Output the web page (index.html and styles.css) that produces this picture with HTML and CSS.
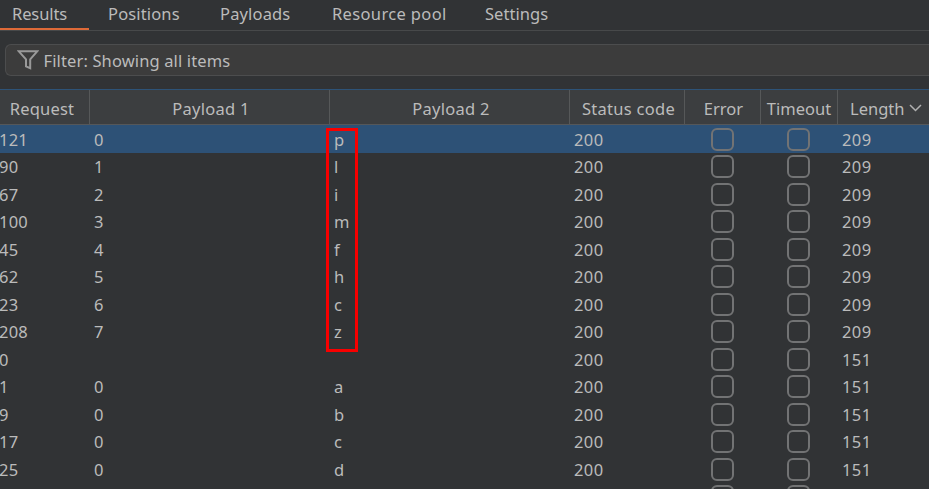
FILE: index.html
```html
<!DOCTYPE html>
<html lang="en">
<head>
<meta charset="utf-8">
<title>Results</title>
<link rel="stylesheet" href="styles.css">
</head>
<body>
<nav class="tabs">
<span class="tab active"><span class="w-results">Results</span></span>
<span class="tab"><span class="w-positions">Positions</span></span>
<span class="tab"><span class="w-payloads">Payloads</span></span>
<span class="tab"><span class="w-pool">Resource pool</span></span>
<span class="tab"><span class="w-settings">Settings</span></span>
</nav>
<div class="filter">
<svg class="funnel" width="22" height="20" viewBox="0 0 22 20"><path d="M1.8 1.3H20.2L13.2 9.3V18.2L9 16.4V9.3Z"/></svg>
<span class="filter-text">Filter: Showing all items</span>
</div>
<main class="table">
<div class="head">
<span>Request</span><span class="wide">Payload 1</span><span class="wide">Payload 2</span><span class="wide">Status code</span><span class="error">Error</span><span>Timeout</span>
<span class="sorted">Length<svg class="chevron" width="13" height="8" viewBox="0 0 13 8"><path d="M1 1L6.5 6.5L12 1"/></svg></span>
</div>
<div class="rows">
<div class="row selected"><span>121</span><span>0</span><span>p</span><span>200</span><i></i><i></i><span>209</span></div>
<div class="row"><span>90</span><span>1</span><span>l</span><span>200</span><i></i><i></i><span>209</span></div>
<div class="row"><span>67</span><span>2</span><span>i</span><span>200</span><i></i><i></i><span>209</span></div>
<div class="row"><span>100</span><span>3</span><span>m</span><span>200</span><i></i><i></i><span>209</span></div>
<div class="row"><span>45</span><span>4</span><span>f</span><span>200</span><i></i><i></i><span>209</span></div>
<div class="row"><span>62</span><span>5</span><span>h</span><span>200</span><i></i><i></i><span>209</span></div>
<div class="row"><span>23</span><span>6</span><span>c</span><span>200</span><i></i><i></i><span>209</span></div>
<div class="row"><span>208</span><span>7</span><span>z</span><span>200</span><i></i><i></i><span>209</span></div>
<div class="row"><span>0</span><span></span><span></span><span>200</span><i></i><i></i><span>151</span></div>
<div class="row"><span>1</span><span>0</span><span>a</span><span>200</span><i></i><i></i><span>151</span></div>
<div class="row"><span>9</span><span>0</span><span>b</span><span>200</span><i></i><i></i><span>151</span></div>
<div class="row"><span>17</span><span>0</span><span>c</span><span>200</span><i></i><i></i><span>151</span></div>
<div class="row"><span>25</span><span>0</span><span>d</span><span>200</span><i></i><i></i><span>151</span></div>
<div class="row"><span></span><span></span><span></span><span></span><i></i><i></i><span></span></div>
</div>
<div class="highlight"></div>
</main>
</body>
</html>
```
FILE: styles.css
```css
* { box-sizing: border-box; }
body {
  margin: 0;
  width: 929px;
  height: 489px;
  overflow: hidden;
  background: #313335;
  color: #bbbbbb;
  font: 16.5px/24px "Noto Sans", "Open Sans", sans-serif;
}
.tabs {
  display: flex;
  height: 31px;
  border-bottom: 1px solid #47494a;
  white-space: nowrap;
}
.tab {
  height: 30px;
  padding: 2px 0 0 19px;
  margin-right: 22px;
}
.tab > span { display: block; }
.tab.active {
  width: 89px;
  padding-left: 12px;
  margin-right: 0;
  border-bottom: 2px solid #de6a38;
}
.w-results { letter-spacing: -.1px; }
.w-positions { width: 71px; letter-spacing: .15px; }
.w-payloads { width: 71px; letter-spacing: .15px; }
.w-pool { width: 112px; letter-spacing: .35px; }
.w-settings { letter-spacing: .05px; }
.filter {
  display: flex;
  align-items: center;
  height: 32px;
  margin: 13px 0 0 5px;
  padding-left: 11px;
  border: 1px solid #4c4d4e;
  border-right: 0;
  border-radius: 6px 0 0 6px;
  background: #3c3c3c;
}
.funnel { fill: none; stroke: #999; stroke-width: 2; }
.filter-text { margin: 2px 0 0 4.5px; letter-spacing: .13px; }
.table { position: relative; margin-top: 13px; }
.head, .row {
  display: grid;
  grid-template-columns: 90px 240px 240px 115px 76px 77px 91px;
}
.head {
  height: 36px;
  border-top: 1px solid #2d5378;
  border-bottom: 1px solid #555759;
  background: #3c3e40;
  white-space: nowrap;
}
.head span {
  display: flex;
  justify-content: center;
  padding-top: 7px;
  border-right: 1px solid #565859;
}
.head .wide { padding-left: 3px; letter-spacing: .28px; }
.head .error { padding-left: 2px; }
.head span:first-child { padding-right: 5px; letter-spacing: .2px; }
.head .sorted {
  justify-content: flex-start;
  padding-left: 12px;
  border: 0;
}
.chevron {
  margin: 7px 0 0 5px;
  fill: none;
  stroke: #b0b0b0;
  stroke-width: 1.5;
}
.row { height: 27.5px; align-items: center; }
.row span { padding: 1px 0 0 4px; letter-spacing: .4px; height: 24px; }
.row span:first-child { padding-left: 0; margin-left: -1px; letter-spacing: .2px; }
.row.selected { background: #2d5176; }
.row i {
  width: 23px;
  height: 23px;
  margin: .5px 0 0 26px;
  border: 2px solid #727374;
  border-radius: 6px;
}
.highlight {
  position: absolute;
  left: 326px;
  top: 39px;
  width: 32px;
  height: 224px;
  border: 3px solid #f80000;
}
```
